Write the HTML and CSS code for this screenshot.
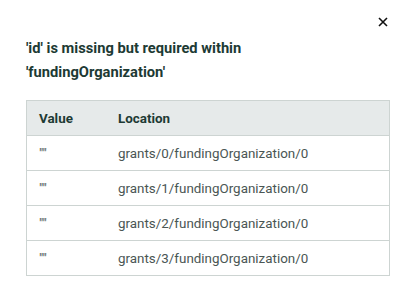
FILE: index.html
```html
<!DOCTYPE html>
<html lang="en">
<head>
    <meta charset="UTF-8">
    <meta name="viewport" content="width=device-width, initial-scale=1.0">
    <title>Validation error</title>
    <link rel="stylesheet" href="styles.css">
</head>
<body>
    <div class="dialog">
        <div class="dialog-top">
            <button class="close" aria-label="Close">
                <svg width="10" height="10" viewBox="0 0 10 10">
                    <path d="M1 1 L9 9 M9 1 L1 9" stroke="#111" stroke-width="1.6" fill="none"/>
                </svg>
            </button>
        </div>
        <h2 class="title">'id' is missing but required within 'fundingOrganization'</h2>

        <table class="errors">
            <thead>
                <tr>
                    <th class="col-value">Value</th>
                    <th>Location</th>
                </tr>
            </thead>
            <tbody>
                <tr><td class="col-value">""</td><td>grants/0/fundingOrganization/0</td></tr>
                <tr><td class="col-value">""</td><td>grants/1/fundingOrganization/0</td></tr>
                <tr><td class="col-value">""</td><td>grants/2/fundingOrganization/0</td></tr>
                <tr><td class="col-value">""</td><td>grants/3/fundingOrganization/0</td></tr>
            </tbody>
        </table>
    </div>
</body>
</html>
```

FILE: styles.css
```css
body {
    margin: 0;
    font-family: Roboto, 'Liberation Sans', sans-serif;
    background: #fff;
    color: #4a5654;
}

.dialog {
    padding: 11px 23px 0 26px;
}

.dialog-top {
    display: flex;
    justify-content: flex-end;
    height: 16px;
}

.close {
    background: none;
    border: none;
    padding: 0;
    width: 12px;
    height: 12px;
    margin-top: 5px;
    margin-right: 1px;
    display: flex;
    align-items: center;
    justify-content: center;
    cursor: pointer;
}

.title {
    margin: 9px 0 16px;
    font-size: 14.7px;
    font-weight: 700;
    line-height: 24px;
    color: #1d3a34;
    max-width: 250px;
}

.errors {
    width: 100%;
    border-collapse: collapse;
    border: 1px solid #cdd4d2;
    font-size: 13.4px;
}

.errors th {
    background: #e6eaea;
    color: #1d3a34;
    font-weight: 700;
    text-align: left;
    height: 34px;
    padding: 0 12px;
}

.errors td {
    height: 34px;
    padding: 0 12px;
    border-top: 1px solid #cdd4d2;
    color: #4a5654;
}

.errors .col-value {
    width: 55px;
}
```
